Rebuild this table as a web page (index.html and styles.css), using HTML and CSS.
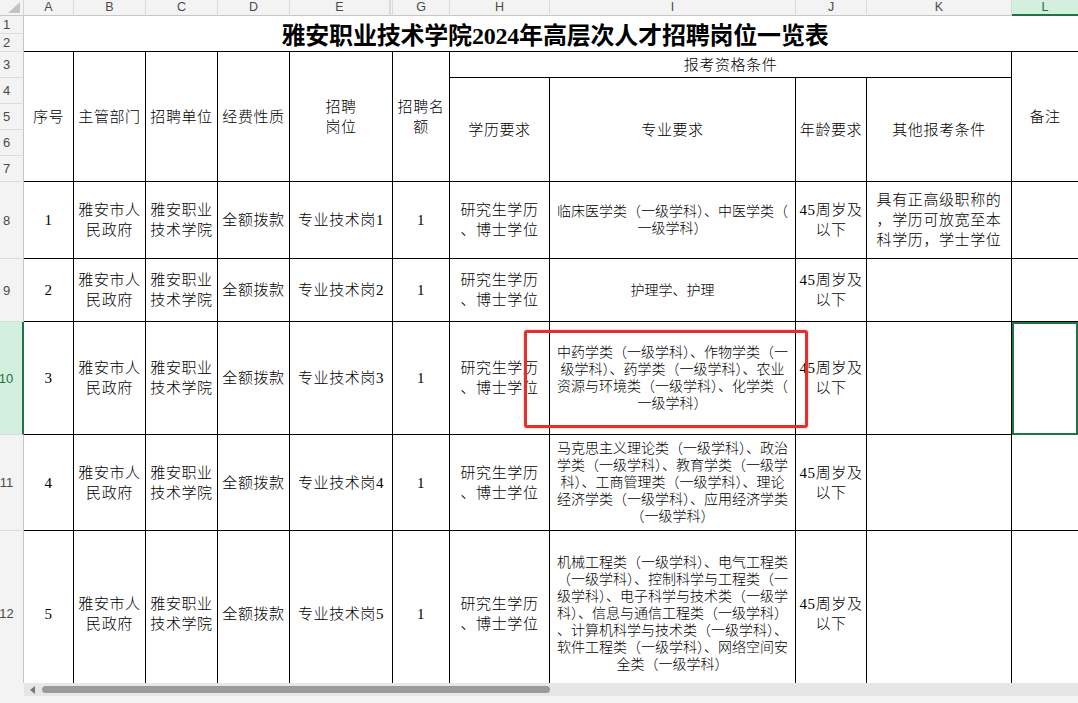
FILE: index.html
```html
<!DOCTYPE html>
<html lang="zh-CN">
<head>
<meta charset="utf-8">
<title>雅安职业技术学院2024年高层次人才招聘岗位一览表</title>
<link rel="stylesheet" href="styles.css">
</head>
<body>
<div class="sheet">
  <div class="grid">
    <div class="corner"><svg width="14" height="12" viewBox="0 0 14 12"><polygon points="13,0 13,11 1,11" fill="#c3c3c3"/></svg></div>
    <div class="ch">A</div>
    <div class="ch">B</div>
    <div class="ch">C</div>
    <div class="ch">D</div>
    <div class="ch">E</div>
    <div class="ch hid"></div>
    <div class="ch">G</div>
    <div class="ch">H</div>
    <div class="ch">I</div>
    <div class="ch">J</div>
    <div class="ch">K</div>
    <div class="ch sel">L</div>

    <div class="rh">1</div>
    <div class="title">雅安职业技术学院2024年高层次人才招聘岗位一览表</div>
    <div class="rh">2</div>

    <div class="rh">3</div>
    <div class="c hd rs5">序号</div>
    <div class="c hd rs5">主管部门</div>
    <div class="c hd rs5">招聘单位</div>
    <div class="c hd rs5">经费性质</div>
    <div class="c hd rs5 cs2">招聘<br>岗位</div>
    <div class="c hd rs5">招聘名<br>额</div>
    <div class="c hd cs4">报考资格条件</div>
    <div class="c hd rs5 last">备注</div>
    <div class="rh">4</div>
    <div class="c hd rs4">学历要求</div>
    <div class="c hd rs4">专业要求</div>
    <div class="c hd rs4">年龄要求</div>
    <div class="c hd rs4">其他报考条件</div>
    <div class="rh">5</div>
    <div class="rh">6</div>
    <div class="rh">7</div>

    <div class="rh">8</div>
    <div class="c">1</div>
    <div class="c">雅安市人<br>民政府</div>
    <div class="c">雅安职业<br>技术学院</div>
    <div class="c">全额拨款</div>
    <div class="c cs2">专业技术岗1</div>
    <div class="c">1</div>
    <div class="c">研究生学历<br>、博士学位</div>
    <div class="c major">临床医学类（一级学科）、中医学类（<br>一级学科）</div>
    <div class="c">45周岁及<br>以下</div>
    <div class="c">具有正高级职称的<br>，学历可放宽至本<br>科学历，学士学位</div>
    <div class="c last"></div>

    <div class="rh">9</div>
    <div class="c">2</div>
    <div class="c">雅安市人<br>民政府</div>
    <div class="c">雅安职业<br>技术学院</div>
    <div class="c">全额拨款</div>
    <div class="c cs2">专业技术岗2</div>
    <div class="c">1</div>
    <div class="c">研究生学历<br>、博士学位</div>
    <div class="c major">护理学、护理</div>
    <div class="c">45周岁及<br>以下</div>
    <div class="c"></div>
    <div class="c last"></div>

    <div class="rh cur">10</div>
    <div class="c">3</div>
    <div class="c">雅安市人<br>民政府</div>
    <div class="c">雅安职业<br>技术学院</div>
    <div class="c">全额拨款</div>
    <div class="c cs2">专业技术岗3</div>
    <div class="c">1</div>
    <div class="c">研究生学历<br>、博士学位</div>
    <div class="c major">中药学类（一级学科）、作物学类（一<br>级学科）、药学类（一级学科）、农业<br>资源与环境类（一级学科）、化学类（<br>一级学科）</div>
    <div class="c">45周岁及<br>以下</div>
    <div class="c"></div>
    <div class="c last active"></div>

    <div class="rh">11</div>
    <div class="c">4</div>
    <div class="c">雅安市人<br>民政府</div>
    <div class="c">雅安职业<br>技术学院</div>
    <div class="c">全额拨款</div>
    <div class="c cs2">专业技术岗4</div>
    <div class="c">1</div>
    <div class="c">研究生学历<br>、博士学位</div>
    <div class="c major">马克思主义理论类（一级学科）、政治<br>学类（一级学科）、教育学类（一级学<br>科）、工商管理类（一级学科）、理论<br>经济学类（一级学科）、应用经济学类<br>（一级学科）</div>
    <div class="c">45周岁及<br>以下</div>
    <div class="c"></div>
    <div class="c last"></div>

    <div class="rh">12</div>
    <div class="c">5</div>
    <div class="c">雅安市人<br>民政府</div>
    <div class="c">雅安职业<br>技术学院</div>
    <div class="c">全额拨款</div>
    <div class="c cs2">专业技术岗5</div>
    <div class="c">1</div>
    <div class="c">研究生学历<br>、博士学位</div>
    <div class="c major">机械工程类（一级学科）、电气工程类<br>（一级学科）、控制科学与工程类（一<br>级学科）、电子科学与技术类（一级学<br>科）、信息与通信工程类（一级学科）<br>、计算机科学与技术类（一级学科）、<br>软件工程类（一级学科）、网络空间安<br>全类（一级学科）</div>
    <div class="c">45周岁及<br>以下</div>
    <div class="c"></div>
    <div class="c last"></div>
  </div>
  <div class="mark"></div>
</div>
<div class="hscroll">
  <div class="track">
    <span class="arrow"></span>
    <span class="thumb"></span>
  </div>
</div>
</body>
</html>
```
FILE: styles.css
```css
html, body {
  margin: 0;
  padding: 0;
}
body {
  width: 1078px;
  height: 703px;
  overflow: hidden;
  background: #ffffff;
  font-family: "Liberation Serif", "Noto Sans CJK SC", serif;
  color: #000;
}
.sheet {
  position: relative;
  height: 683px;
  overflow: hidden;
}
.grid {
  display: grid;
  grid-template-columns: 24px 50px 72px 72px 72px 100px 3px 57px 100px 246px 71px 145px 66px;
  grid-template-rows: 16px 18px 18px 26px 26px 26px 26px 26px 77px 63px 113px 96px 166px;
}
.corner {
  background: #f3f3f3;
  border-bottom: 1px solid #c6c6c6;
  border-right: 1px solid #d6d6d6;
  box-sizing: border-box;
  display: flex;
  align-items: flex-start;
  justify-content: flex-end;
  padding: 2px 2px 0 0;
}
.ch {
  background: #f3f3f3;
  border-bottom: 1px solid #c6c6c6;
  border-right: 1px solid #dadada;
  box-sizing: border-box;
  font-family: "Liberation Sans", "Noto Sans", sans-serif;
  font-size: 12.5px;
  color: #4a4a4a;
  display: flex;
  align-items: center;
  justify-content: center;
  line-height: 1;
}
.ch.hid {
  border-left: 1px solid #dadada;
}
.ch.sel {
  background: #d3efdf;
  color: #1e6f43;
  border-bottom: 2px solid #217346;
  border-right: none;
}
.rh {
  grid-column: 1;
  background: #f3f3f3;
  border-bottom: 1px solid #dcdcdc;
  border-right: 1px solid #c6c6c6;
  box-sizing: border-box;
  font-family: "Liberation Sans", "Noto Sans", sans-serif;
  font-size: 13px;
  color: #4a4a4a;
  display: flex;
  align-items: center;
  justify-content: center;
  padding-right: 10px;
  line-height: 1;
}
.rh.cur {
  background: #d3efdf;
  color: #1e6f43;
  border-right: 2px solid #217346;
}
.title {
  grid-column: span 12;
  grid-row: span 2;
  border-bottom: 1px solid #000;
  box-sizing: border-box;
  display: flex;
  align-items: center;
  justify-content: center;
  padding-left: 8px;
  font-size: 24px;
  font-weight: 700;
  white-space: nowrap;
  letter-spacing: -0.2px;
}
.c {
  border-right: 1px solid #000;
  border-bottom: 1px solid #000;
  box-sizing: border-box;
  display: flex;
  align-items: center;
  justify-content: center;
  text-align: center;
  font-size: 15px;
  font-weight: 300;
  line-height: 20px;
  letter-spacing: 0.6px;
  white-space: nowrap;
  overflow: hidden;
}
.c.last {
  border-right: none;
}
.c.active {
  outline: 2px solid #217346;
  outline-offset: -2px;
}
.c.major {
  font-size: 14px;
  line-height: 17px;
  letter-spacing: 0;
}
.rs5 { grid-row: span 5; }
.rs4 { grid-row: span 4; }
.cs2 { grid-column: span 2; }
.cs4 { grid-column: span 4; }
.mark {
  position: absolute;
  left: 524px;
  top: 330px;
  width: 284px;
  height: 98px;
  box-sizing: border-box;
  border: 3px solid #e3302c;
  border-radius: 3px;
  box-shadow: 0 0 2px rgba(227, 48, 44, 0.5);
}
.hscroll {
  height: 20px;
  background: #f3f3f3;
}
.track {
  margin-left: 24px;
  height: 13px;
  background: #e6e6e6;
  display: flex;
  align-items: center;
  padding-left: 6px;
}
.arrow {
  width: 0;
  height: 0;
  border-top: 4px solid transparent;
  border-bottom: 4px solid transparent;
  border-right: 5px solid #777;
}
.thumb {
  margin-left: 7px;
  width: 508px;
  height: 7px;
  border-radius: 4px;
  background: #9b9b9b;
}
```
